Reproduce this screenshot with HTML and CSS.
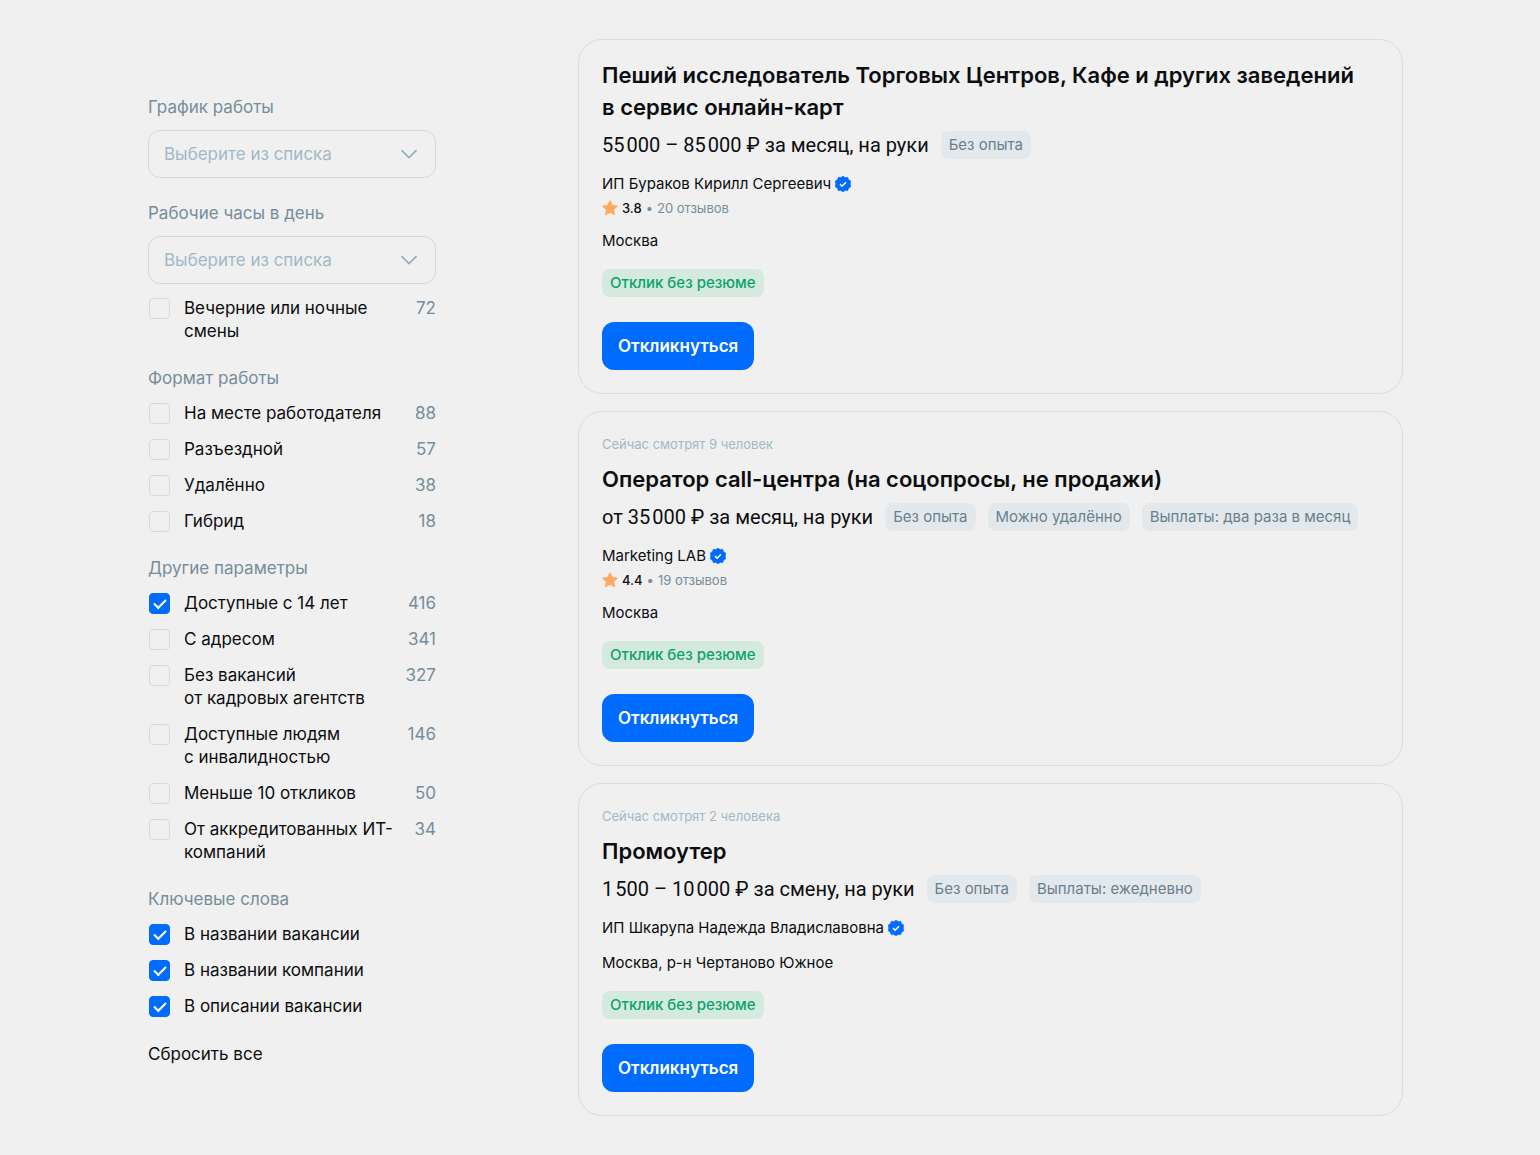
FILE: index.html
```html
<!DOCTYPE html>
<html lang="ru">
  <head>
    <meta charset="UTF-8" />
    <meta name="viewport" content="width=device-width, initial-scale=1.0" />
    <title>Вакансии</title>
    <link rel="stylesheet" href="styles.css">
  </head>
  <body>
    <!-- shared icons -->
    <svg class="sprite" aria-hidden="true">
      <symbol id="chevron" viewBox="0 0 18 10">
        <path d="M1.5 1.2 9 8.6l7.500-7.400" fill="none" stroke="currentColor" stroke-width="1.800" />
      </symbol>
      <symbol id="verified" viewBox="0 0 16 16">
        <path d="M8 0l2.200 1.500 2.600-.3.900 2.500 2.200 1.400L15.300 8l.6 2.800-2.200 1.400-.9 2.500-2.600-.3L8 16l-2.200-1.600-2.600.3-.9-2.500L.1 10.800.7 8 .1 5.100l2.200-1.400.9-2.500 2.600.3z" fill="#006bff" stroke="#006bff" stroke-width=".4" stroke-linejoin="round" />
        <path d="M5 8.100l2.100 2.100 3.900-4" fill="none" stroke="#fff" stroke-width="1.500" />
      </symbol>
      <symbol id="star" viewBox="0 0 16 16">
        <path d="M8 1.200l2 4.400 4.900.6-3.600 3.300 1 4.900L8 12l-4.300 2.400 1-4.900L1.100 6.200 6 5.600z" fill="#ffa862" stroke="#ffa862" stroke-width="1.400" stroke-linejoin="round" />
      </symbol>
    </svg>

    <div class="page">
      <form class="filters">
        <div class="field">
          <label class="filter-title" for="schedule">График работы</label>
          <div class="select">
            <select id="schedule">
              <option>Выберите из списка</option>
            </select>
            <svg><use href="#chevron" /></svg>
          </div>
        </div>
        <div class="field">
          <label class="filter-title" for="hours">Рабочие часы в день</label>
          <div class="select">
            <select id="hours">
              <option>Выберите из списка</option>
            </select>
            <svg><use href="#chevron" /></svg>
          </div>
        </div>
        <div class="checks">
          <label class="check"><input type="checkbox"><span>Вечерние или ночные смены</span><span class="count">72</span></label>
        </div>

        <fieldset>
          <legend class="filter-title">Формат работы</legend>
          <div class="checks">
            <label class="check"><input type="checkbox"><span>На месте работодателя</span><span class="count">88</span></label>
            <label class="check"><input type="checkbox"><span>Разъездной</span><span class="count">57</span></label>
            <label class="check"><input type="checkbox"><span>Удалённо</span><span class="count">38</span></label>
            <label class="check"><input type="checkbox"><span>Гибрид</span><span class="count">18</span></label>
          </div>
        </fieldset>

        <fieldset>
          <legend class="filter-title">Другие параметры</legend>
          <div class="checks">
            <label class="check"><input type="checkbox" checked><span>Доступные с 14 лет</span><span class="count">416</span></label>
            <label class="check"><input type="checkbox"><span>С адресом</span><span class="count">341</span></label>
            <label class="check"><input type="checkbox"><span>Без вакансий от&nbsp;кадровых агентств</span><span class="count">327</span></label>
            <label class="check"><input type="checkbox"><span>Доступные людям с&nbsp;инвалидностью</span><span class="count">146</span></label>
            <label class="check"><input type="checkbox"><span>Меньше 10 откликов</span><span class="count">50</span></label>
            <label class="check"><input type="checkbox"><span>От аккредитованных ИТ-<wbr>компаний</span><span class="count">34</span></label>
          </div>
        </fieldset>

        <fieldset>
          <legend class="filter-title">Ключевые слова</legend>
          <div class="checks">
            <label class="check"><input type="checkbox" checked><span>В названии вакансии</span></label>
            <label class="check"><input type="checkbox" checked><span>В названии компании</span></label>
            <label class="check"><input type="checkbox" checked><span>В описании вакансии</span></label>
          </div>
        </fieldset>

        <button class="reset" type="reset">Сбросить все</button>
      </form>

      <main class="list">
        <article class="card">
          <h2>Пеший исследователь Торговых Центров, Кафе и других заведений в&nbsp;сервис онлайн-карт</h2>
          <div class="salary">
            <span class="sum">55&hairsp;000 – 85&hairsp;000 ₽ за месяц, на руки</span>
            <span class="tag">Без опыта</span>
          </div>
          <div class="company">ИП Бураков Кирилл Сергеевич <svg><use href="#verified" /></svg></div>
          <div class="rating"><svg><use href="#star" /></svg><b>3.8</b><span>•</span><span>20 отзывов</span></div>
          <div class="city">Москва</div>
          <div class="badge">Отклик без резюме</div>
          <button class="btn" type="button">Откликнуться</button>
        </article>

        <article class="card">
          <div class="watching">Сейчас смотрят 9 человек</div>
          <h2>Оператор call-центра (на соцопросы, не продажи)</h2>
          <div class="salary">
            <span class="sum">от 35&hairsp;000 ₽ за месяц, на руки</span>
            <span class="tag">Без опыта</span>
            <span class="tag">Можно удалённо</span>
            <span class="tag">Выплаты: два раза в месяц</span>
          </div>
          <div class="company">Marketing LAB <svg><use href="#verified" /></svg></div>
          <div class="rating"><svg><use href="#star" /></svg><b>4.4</b><span>•</span><span>19 отзывов</span></div>
          <div class="city">Москва</div>
          <div class="badge">Отклик без резюме</div>
          <button class="btn" type="button">Откликнуться</button>
        </article>

        <article class="card">
          <div class="watching">Сейчас смотрят 2 человека</div>
          <h2>Промоутер</h2>
          <div class="salary">
            <span class="sum">1&hairsp;500 – 10&hairsp;000 ₽ за смену, на руки</span>
            <span class="tag">Без опыта</span>
            <span class="tag">Выплаты: ежедневно</span>
          </div>
          <div class="company">ИП Шкарупа Надежда Владиславовна <svg><use href="#verified" /></svg></div>
          <div class="city">Москва, р-н Чертаново Южное</div>
          <div class="badge">Отклик без резюме</div>
          <button class="btn" type="button">Откликнуться</button>
        </article>
      </main>
    </div>
  </body>
</html>
```
FILE: styles.css
```css
* {
  margin: 0;
  padding: 0;
  box-sizing: border-box;
}
body {
  font-family: Inter, "Liberation Sans", sans-serif;
  background-color: #f0f0f0;
  color: #0c0d0f;
}
button,
select {
  font-family: inherit;
}
.sprite {
  display: none;
}
.page {
  display: grid;
  grid-template-columns: 288px 1fr;
  column-gap: 142px;
  padding: 39px 137px 39px 148px;
}

/* filters */
.filters {
  padding-top: 57px;
  font-size: 17px;
  line-height: 23px;
}
.field {
  margin-bottom: 24px;
}
.field + .checks {
  margin-top: -11px;
}
.filter-title {
  display: block;
  margin-bottom: 11px;
  color: #768d9b;
}
legend.filter-title {
  margin-bottom: 12px;
}
.select {
  position: relative;
}
.select select {
  display: block;
  width: 100%;
  height: 48px;
  padding: 0 48px 0 15px;
  appearance: none;
  background: none;
  border: 1px solid #d0dce4;
  border-radius: 12px;
  font-size: 17px;
  color: #a2b8c7;
}
.select svg {
  position: absolute;
  top: 19px;
  right: 18px;
  width: 18px;
  height: 10px;
  color: #94aebf;
  pointer-events: none;
}
fieldset {
  margin-top: 24px;
  border: none;
}
.checks {
  display: grid;
  row-gap: 13px;
}
.check {
  display: grid;
  grid-template-columns: 22px 1fr auto;
  column-gap: 14px;
  cursor: pointer;
}
.check input {
  appearance: none;
  width: 21px;
  height: 21px;
  margin: 1px;
  border: 1px solid #d0dce4;
  border-radius: 4px;
}
.check input:checked {
  display: grid;
  place-items: center;
  background-color: #006bff;
  border-color: #006bff;
}
.check input:checked::after {
  content: "";
  width: 10px;
  height: 5px;
  margin-bottom: 3px;
  border: solid #fff;
  border-width: 0 0 2px 2px;
  transform: rotate(-45deg);
}
.count {
  color: #768d9b;
}
.reset {
  display: block;
  margin-top: 25px;
  background: none;
  border: none;
  font-size: 17px;
  line-height: 23px;
  color: inherit;
  cursor: pointer;
}

/* vacancies */
.list {
  display: flex;
  flex-direction: column;
  gap: 17px;
}
.card {
  padding: 19px 23px 23px;
  border: 1px solid #d5dfe6;
  border-radius: 24px;
  font-size: 15px;
  line-height: 24px;
}
.watching {
  padding-top: 3px;
  margin-bottom: 9px;
  font-size: 13px;
  line-height: 20px;
  color: #a2b8c7;
}
.card h2 {
  font-size: 22px;
  font-weight: 600;
  line-height: 32px;
}
.salary {
  display: flex;
  flex-wrap: wrap;
  align-items: center;
  gap: 12px;
  margin-top: 8px;
}
.sum {
  font-family: Roboto, "Liberation Sans", sans-serif;
  font-size: 20px;
}
.tag,
.badge {
  padding: 0 8px;
  border-radius: 8px;
  line-height: 28px;
}
.tag {
  background-color: #e3e8ec;
  color: #6a7f8c;
}
.company {
  display: flex;
  align-items: center;
  gap: 4px;
  margin-top: 13px;
}
.company svg,
.rating svg {
  width: 16px;
  height: 16px;
}
.rating {
  display: flex;
  align-items: center;
  gap: 4px;
  margin-top: 2px;
  font-size: 13px;
  line-height: 20px;
  color: #768d9b;
}
.rating b {
  font-weight: 500;
  color: #0c0d0f;
}
.city {
  margin-top: 11px;
}
.badge {
  width: fit-content;
  margin-top: 16px;
  background-color: #d5eadf;
  color: #0ba36c;
  font-weight: 500;
}
.btn {
  display: block;
  height: 48px;
  margin-top: 25px;
  padding: 0 16px;
  background-color: #006bff;
  border: none;
  border-radius: 12px;
  font-size: 17px;
  font-weight: 600;
  color: #fff;
  cursor: pointer;
}
```
